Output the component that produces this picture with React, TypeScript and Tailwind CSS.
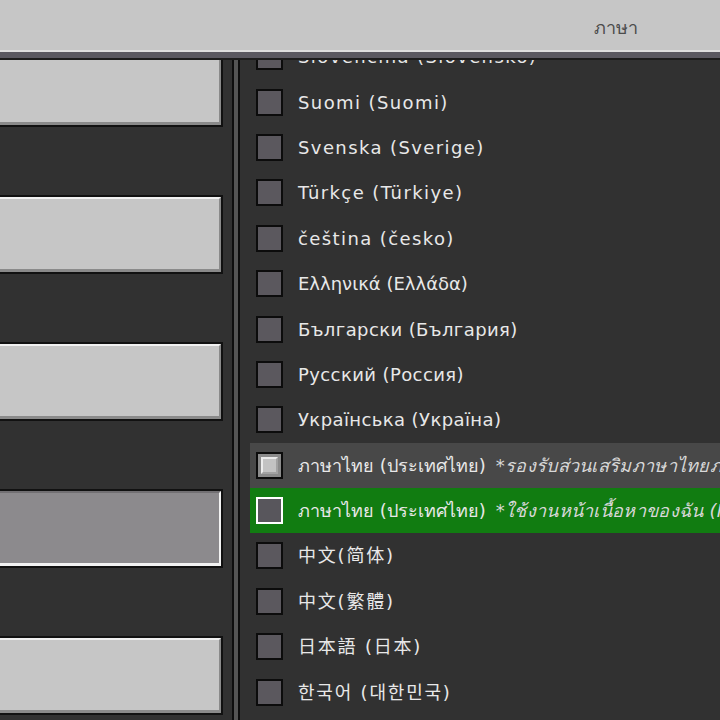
import React from "react";

type Row = { label: string; extra?: string; state?: "hover" | "selected"; kind: "latin" | "greek" | "cyr" | "thai" | "cjk" };

const rows: Row[] = [
  { label: "Slovenčina (Slovensko)", kind: "latin" },
  { label: "Suomi (Suomi)", kind: "latin" },
  { label: "Svenska (Sverige)", kind: "latin" },
  { label: "Türkçe (Türkiye)", kind: "latin" },
  { label: "čeština (česko)", kind: "latin" },
  { label: "Ελληνικά (Ελλάδα)", kind: "greek" },
  { label: "Български (България)", kind: "cyr" },
  { label: "Русский (Россия)", kind: "cyr" },
  { label: "Українська (Україна)", kind: "cyr" },
  { label: "ภาษาไทย (ประเทศไทย)", extra: "*รองรับส่วนเสริมภาษาไทยภายนอก", state: "hover", kind: "thai" },
  { label: "ภาษาไทย (ประเทศไทย)", extra: "*ใช้งานหน้าเนื้อหาของฉัน (Marketplace)", state: "selected", kind: "thai" },
  { label: "中文(简体)", kind: "cjk" },
  { label: "中文(繁體)", kind: "cjk" },
  { label: "日本語 (日本)", kind: "cjk" },
  { label: "한국어 (대한민국)", kind: "cjk" },
];

const tracking: Record<Row["kind"], string> = {
  latin: "tracking-[1.4px]",
  greek: "tracking-[0px]",
  cyr: "tracking-[0.4px]",
  thai: "tracking-[0px]",
  cjk: "tracking-[1.8px]",
};

function Checkbox({ state }: { state?: "hover" | "selected" }) {
  if (state === "hover") {
    return (
      <div className="w-[27px] h-[27px] shrink-0 border-[2px] border-[#0c0c0c] bg-[#8b8b8b] p-[3px]">
        <div className="w-full h-full bg-[#c3c3c3] border-t-[2px] border-l-[2px] border-t-[#ececec] border-l-[#ececec] border-b-[2px] border-r-[2px] border-b-[#a2a2a2] border-r-[#a2a2a2]" />
      </div>
    );
  }
  if (state === "selected") {
    return <div className="w-[27px] h-[27px] shrink-0 border-[2px] border-white bg-[#58565c]" />;
  }
  return <div className="w-[27px] h-[27px] shrink-0 border-[2px] border-[#0c0c0c] bg-[#5b585e]" />;
}

function LeftButton({ pressed }: { pressed?: boolean }) {
  if (pressed) {
    return (
      <div className="w-[223px] h-[79px] shrink-0 border-[2px] border-l-0 border-[#111111]">
        <div className="w-full h-full bg-[#8c8a8d] border-t-[2px] border-t-[#727073] border-b-[3px] border-b-[#f2f2f2] border-r-[2px] border-r-[#f2f2f2]" />
      </div>
    );
  }
  return (
    <div className="w-[223px] h-[79px] shrink-0 border-[2px] border-l-0 border-[#111111]">
      <div className="w-full h-full bg-[#c6c6c6] border-t-[2px] border-t-[#f0f0f0] border-b-[3px] border-b-[#8a8a8a] border-r-[2px] border-r-[#8a8a8a]" />
    </div>
  );
}

export default function App() {
  return (
    <div
      className="w-[720px] h-[720px] overflow-hidden bg-[#313131] flex flex-col"
      style={{ fontFamily: '"DejaVu Sans", "Noto Sans", "Noto Sans CJK SC", "Noto Sans CJK KR", sans-serif' }}
    >
      <div className="h-[50px] shrink-0 bg-[#c6c6c6] flex items-center justify-end pr-[82px] pt-[4px]">
        <span className="text-[18px] text-[#4c4c4c]">ภาษา</span>
      </div>
      <div className="h-[2px] shrink-0 bg-[#dedede]" />
      <div className="h-[6px] shrink-0 bg-[#5a5860]" />
      <div className="h-[2px] shrink-0 bg-[#1c1c1c]" />
      <div className="flex-1 flex min-h-0">
        <div className="w-[232px] shrink-0 overflow-hidden">
          <div className="flex flex-col gap-[68px] -mt-[12px]">
            <LeftButton />
            <LeftButton />
            <LeftButton />
            <LeftButton pressed />
            <LeftButton />
          </div>
        </div>
        <div className="w-[2px] shrink-0 bg-[#0e0e0e]" />
        <div className="w-[4px] shrink-0 bg-[#555555]" />
        <div className="w-[2px] shrink-0 bg-[#0e0e0e]" />
        <div className="flex-1 min-w-0 overflow-hidden pl-[10px]">
          <div className="flex flex-col -mt-[26px]">
            {rows.map((r, i) => (
              <div
                key={i}
                className={
                  "h-[45.4px] shrink-0 flex items-center gap-[15px] pl-[6px] whitespace-nowrap " +
                  (r.state === "hover" ? "bg-[#484848]" : r.state === "selected" ? "bg-[#117c11]" : "")
                }
              >
                <Checkbox state={r.state} />
                <span className={"text-[18px] text-[#e8e8e8] " + tracking[r.kind]}>
                  {r.label}
                  {r.extra ? (
                    <span className="italic text-[#d8d8d8] ml-[10px] text-[18px] tracking-[0.3px]">{r.extra}</span>
                  ) : null}
                </span>
              </div>
            ))}
          </div>
        </div>
      </div>
    </div>
  );
}
